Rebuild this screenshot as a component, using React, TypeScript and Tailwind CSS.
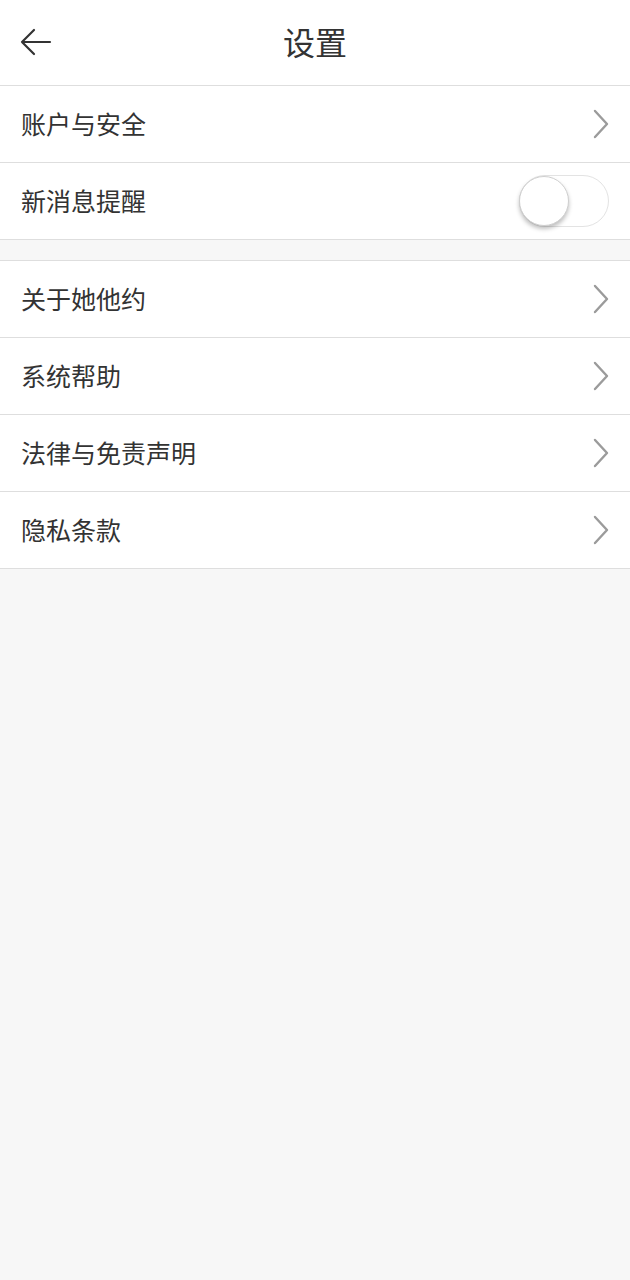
const Chevron = () => (
  <svg width="18" height="30" viewBox="0 0 18 30" fill="none">
    <path d="M3 2 L15 15 L3 28" stroke="#9b9b9b" strokeWidth="2.4" strokeLinecap="round" strokeLinejoin="round" />
  </svg>
);

const Row = ({ label, right }: { label: string; right?: React.ReactNode }) => (
  <div className="flex h-[77px] items-center justify-between border-b border-[#dedede] bg-white pl-[21px] pr-[20px]">
    <span className="text-[25px] text-[#333333]">{label}</span>
    {right ?? <Chevron />}
  </div>
);

export default function App() {
  return (
    <div
      className="min-h-[1280px] bg-[#f7f7f7]"
      style={{ fontFamily: '"Noto Sans CJK SC", "Noto Sans", sans-serif' }}
    >
      <div className="relative flex h-[86px] items-center justify-center border-b border-[#dedede] bg-white pb-[3px]">
        <svg className="absolute left-[20px] top-[28px]" width="32" height="28" viewBox="0 0 32 28" fill="none">
          <path d="M14 2 L2 14 L14 26 M2 14 H30" stroke="#333" strokeWidth="2.2" strokeLinecap="round" strokeLinejoin="round" />
        </svg>
        <span className="text-[32px] text-[#333333]">设置</span>
      </div>
      <Row label="账户与安全" />
      <Row
        label="新消息提醒"
        right={
          <div className="relative mr-[1px] h-[52px] w-[90px] rounded-full border border-[#e3e3e3] bg-white">
            <div className="absolute left-[-1px] top-[0px] h-[50px] w-[50px] rounded-full border border-[#cfcfcf] bg-white shadow-[0_3px_4px_rgba(0,0,0,0.25)]" />
          </div>
        }
      />
      <div className="h-[21px] border-b border-[#dedede] bg-[#f7f7f7]" />
      <Row label="关于她他约" />
      <Row label="系统帮助" />
      <Row label="法律与免责声明" />
      <Row label="隐私条款" />
    </div>
  );
}
